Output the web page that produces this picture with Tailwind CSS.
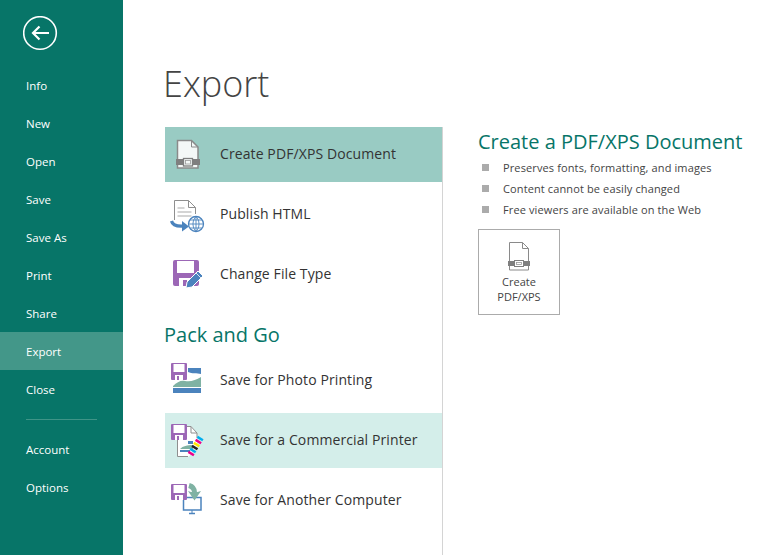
<!DOCTYPE html>
<html lang="en">
<head>
  <meta charset="UTF-8">
  <title>Export</title>
  <script src="https://cdn.jsdelivr.net/npm/@tailwindcss/browser@4"></script>
</head>
<body class="w-[760px] h-[555px] overflow-hidden bg-white font-['Open_Sans',sans-serif] flex">
  <!-- Sidebar -->
  <nav class="w-[123px] h-full bg-[#077568] text-white text-[11.5px] shrink-0 flex flex-col">
    <div class="h-[66px] pl-[23px] pt-[16px]">
      <svg width="35" height="35" viewBox="0 0 35 35" fill="none" stroke="#fff">
        <circle cx="17" cy="17" r="16.300" stroke-width="1.600"/>
        <path d="M26 17H10M16.500 10.500L10 17l6.500 6.500" stroke-width="2.200"/>
      </svg>
    </div>
    <a class="h-[38px] pl-[26px] pt-[2px] flex items-center">Info</a>
    <a class="h-[38px] pl-[26px] pt-[2px] flex items-center">New</a>
    <a class="h-[38px] pl-[26px] pt-[2px] flex items-center">Open</a>
    <a class="h-[38px] pl-[26px] pt-[2px] flex items-center">Save</a>
    <a class="h-[38px] pl-[26px] pt-[2px] flex items-center">Save As</a>
    <a class="h-[38px] pl-[26px] pt-[2px] flex items-center">Print</a>
    <a class="h-[38px] pl-[26px] pt-[2px] flex items-center">Share</a>
    <a class="h-[38px] pl-[26px] pt-[2px] flex items-center bg-[#439789]">Export</a>
    <a class="h-[38px] pl-[26px] pt-[2px] flex items-center">Close</a>
    <div class="ml-[26px] w-[71px] h-px bg-[#3f9487] mt-[11px] mb-[11px]"></div>
    <a class="h-[38px] pl-[26px] flex items-center">Account</a>
    <a class="h-[38px] pl-[26px] flex items-center">Options</a>
  </nav>

  <main class="flex-1 flex flex-col">
    <h1 class="h-[127px] pl-[40px] pt-[57px] text-[36px] leading-[54px] font-light text-[#444]">Export</h1>
    <div class="flex flex-1">
      <!-- Left list -->
      <div class="w-[320px] border-r border-[#d4d4d4] pl-[42px] text-[14px] tracking-[0.1px] text-[#333]">
        <div class="h-[55px] bg-[#99cbc3] flex items-center">
          <svg class="w-[55px] h-[55px] shrink-0" viewBox="0 0 55 55" fill="none">
            <path d="M12.500 41V13.500h14l6.500 6.500v21z" stroke="#8a8a8a" stroke-width="1.500" fill="#f4f8f7"/>
            <path d="M26.500 13.500V20H33" stroke="#8a8a8a"/>
            <path d="M11 32h7v6h-7zM28 32h7v6h-7z" fill="#7f7f7f"/>
            <rect x="18.500" y="31.500" width="9" height="7.500" stroke="#7f7f7f" stroke-width="1.300" fill="#f4f8f7"/>
            <rect x="20.500" y="33.500" width="5" height="3.500" stroke="#9a9a9a" stroke-width=".8"/>
          </svg>
          <span class="-mt-[2px]">Create PDF/XPS Document</span>
        </div>
        <div class="h-[55px] mt-[5px] flex items-center">
          <svg class="w-[55px] h-[55px] shrink-0" viewBox="0 0 55 55" fill="none">
            <path d="M9.500 33V13.500h14l7 7V27" stroke="#8f8f8f" fill="#fff"/>
            <path d="M23.500 13.500v7h7" stroke="#8f8f8f"/>
            <path d="M12.500 21h7M12.500 25h14M12.500 29h14" stroke="#a9a9a9"/>
            <path d="M6.500 34c1 4 5 5.500 12 5" stroke="#4b83bd" stroke-width="3.200"/>
            <path d="M17 34l7 5.500-7 5z" fill="#4b83bd"/>
            <circle cx="31" cy="37" r="7.500" stroke="#4b83bd" fill="#fff" stroke-width="1.300"/>
            <path d="M23.500 37h15M31 29.500v15M25 33h12M25 41h12M31 29.500c-4 4-4 11 0 15M31 29.500c4 4 4 11 0 15" stroke="#4b83bd" stroke-width=".9"/>
          </svg>
          <span class="-mt-[2px]">Publish HTML</span>
        </div>
        <div class="h-[55px] mt-[5px] flex items-center">
          <svg class="w-[55px] h-[55px] shrink-0" viewBox="0 0 55 55" fill="none">
            <path d="M10 13h22a2 2 0 0 1 2 2v22a2 2 0 0 1-2 2H10a2 2 0 0 1-2-2V15a2 2 0 0 1 2-2z" fill="#9c67b6"/>
            <rect x="12" y="14" width="17" height="12" fill="#fff"/>
            <rect x="14" y="31" width="14" height="8" fill="#fff"/>
            <rect x="18" y="33" width="4" height="6" fill="#9c67b6"/>
            <path d="M21 41l6-1 11-11-5-5-11 11z" fill="#4b83bd" stroke="#fff"/>
            <path d="M31 26l5 5" stroke="#fff" stroke-width=".8"/>
          </svg>
          <span class="-mt-[2px]">Change File Type</span>
        </div>
        <h2 class="-ml-px h-[51px] pt-[18px] text-[20px] leading-[30px] tracking-normal text-[#077568]">Pack and Go</h2>
        <div class="h-[55px] flex items-center">
          <svg class="w-[55px] h-[55px] shrink-0" viewBox="0 0 55 55" fill="none">
            <path d="M7 10h14a1 1 0 0 1 1 1v15a1 1 0 0 1-1 1H7a1 1 0 0 1-1-1V11a1 1 0 0 1 1-1z" fill="#9c67b6"/>
            <rect x="8.500" y="11" width="11" height="8" fill="#fff"/>
            <rect x="10" y="22" width="8" height="5" fill="#fff"/>
            <rect x="12" y="23" width="2" height="4" fill="#9c67b6"/>
            <path d="M23 15h13v6c-4-1-9 0-13-2z" fill="#4b83bd"/>
            <path d="M8 33c4-4 8-6 12-5 6 1 11-1 16-4v10H8z" fill="#7fb2a3"/>
            <path d="M8 35h28v5H8z" fill="#4b83bd"/>
          </svg>
          <span class="-mt-[2px]">Save for Photo Printing</span>
        </div>
        <div class="h-[55px] mt-[5px] bg-[#d4eeea] flex items-center">
          <svg class="w-[55px] h-[55px] shrink-0" viewBox="0 0 55 55" fill="none">
            <path d="M12.500 25v18.500H24L32 33V20l-6-7h-5v12z" fill="#fff"/>
            <path d="M12.500 27v16.500H23M22 13.500h4l6 6.500v5" stroke="#8f8f8f"/>
            <path d="M26 13.500v6.500h6" stroke="#8f8f8f"/>
            <path d="M7 11h14a1 1 0 0 1 1 1v14a1 1 0 0 1-1 1H7a1 1 0 0 1-1-1V12a1 1 0 0 1 1-1z" fill="#9c67b6"/>
            <rect x="8.500" y="12" width="11" height="8" fill="#fff"/>
            <rect x="10" y="22" width="8" height="5" fill="#fff"/>
            <rect x="12" y="23" width="2" height="4" fill="#9c67b6"/>
            <path d="M23 28h5v3h-5z" fill="#4b83bd"/>
            <path d="M15 36c3-3 7-4 13-4v4z" fill="#7fb2a3"/>
            <path d="M15 37h10v2H15z" fill="#4b83bd"/>
            <path d="M35.800 24.500l-1.300 2.100" stroke="#00aeef" stroke-width="6.500"/>
            <path d="M34 27.500l-1.300 2.100" stroke="#ec008c" stroke-width="6.500"/>
            <path d="M32.200 30.500l-1.300 2.100" stroke="#ffe600" stroke-width="6.500"/>
            <path d="M30.400 33.500l-1.300 2.100" stroke="#222" stroke-width="6.500"/>
            <path d="M28.600 36.500l-1.300 2.100" stroke="#00aeef" stroke-width="6.500"/>
            <path d="M26.800 39.500l-1.300 2.100" stroke="#ec008c" stroke-width="6.500"/>
          </svg>
          <span class="-mt-[2px]">Save for a Commercial Printer</span>
        </div>
        <div class="h-[55px] mt-[5px] flex items-center">
          <svg class="w-[55px] h-[55px] shrink-0" viewBox="0 0 55 55" fill="none">
            <rect x="18.500" y="24.500" width="17.500" height="12.500" stroke="#4b83bd" stroke-width="1.500" fill="#fff"/>
            <path d="M7 11h14a1 1 0 0 1 1 1v14a1 1 0 0 1-1 1H7a1 1 0 0 1-1-1V12a1 1 0 0 1 1-1z" fill="#9c67b6"/>
            <rect x="8.500" y="12" width="11" height="8" fill="#fff"/>
            <rect x="10" y="22" width="8" height="5" fill="#fff"/>
            <rect x="12" y="23" width="2" height="4" fill="#9c67b6"/>
            <path d="M24 12.500c3.500 1 5.500 3.500 5.500 7" stroke="#7fb2a3" stroke-width="5"/>
            <path d="M23 18l3 1 6.500 0 3.500-1-6.500 9.500z" fill="#7fb2a3"/>
            <path d="M24 40.500h6" stroke="#4b83bd" stroke-width="1.500"/>
            <path d="M27 37v3" stroke="#4b83bd"/>
          </svg>
          <span class="-mt-[2px]">Save for Another Computer</span>
        </div>
      </div>
      <!-- Right detail -->
      <div class="pl-[35px]">
        <h2 class="text-[20px] leading-[30px] text-[#077568]">Create a PDF/XPS Document</h2>
        <ul class="text-[11px] tracking-[0.12px] text-[#444] mt-[1px]">
          <li class="h-[21px] flex items-center"><span class="w-[7px] h-[7px] bg-[#ababab] ml-[4px] mr-[14px] -mt-[3px]"></span>Preserves fonts, formatting, and images</li>
          <li class="h-[21px] flex items-center"><span class="w-[7px] h-[7px] bg-[#ababab] ml-[4px] mr-[14px] -mt-[3px]"></span>Content cannot be easily changed</li>
          <li class="h-[21px] flex items-center"><span class="w-[7px] h-[7px] bg-[#ababab] ml-[4px] mr-[14px] -mt-[3px]"></span>Free viewers are available on the Web</li>
        </ul>
        <button class="mt-[8px] w-[82px] h-[86px] border border-[#ababab] flex flex-col items-center text-[11px] leading-[15px] text-[#444]">
          <svg class="mt-[12px] w-[24px] h-[29px]" viewBox="0 0 24 29" fill="none">
            <path d="M2.500 28V.5h13l6 6V28z" stroke="#8a8a8a"/>
            <path d="M15.500.5v6h6" stroke="#8a8a8a"/>
            <path d="M1 19h6v5H1zM17 19h6v5h-6z" fill="#7f7f7f"/>
            <rect x="7.500" y="18.500" width="9" height="6" stroke="#7f7f7f" fill="#fff"/>
            <rect x="9.500" y="20.500" width="5" height="2" stroke="#9a9a9a" stroke-width=".8"/>
          </svg>
          <span class="mt-[3px]">Create<br>PDF/XPS</span>
        </button>
      </div>
    </div>
  </main>
</body>
</html>
